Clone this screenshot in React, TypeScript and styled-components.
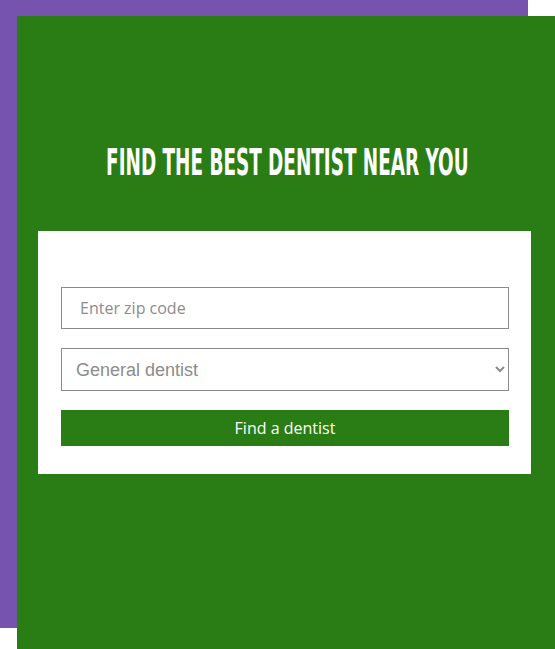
import React from "react";
import styled, { createGlobalStyle } from "styled-components";

const GlobalStyle = createGlobalStyle`
  html, body {
    margin: 0;
    padding: 0;
    background: #ffffff;
  }
`;

const App = () => {
  return (
    <>
      <GlobalStyle />
      <Frame>
        <Panel>
          <TitleRow>
            <Title>FIND THE BEST DENTIST NEAR YOU</Title>
          </TitleRow>
          <Card>
            <ZipInput placeholder="Enter zip code" />
            <TypeSelect defaultValue="general">
              <option value="general">General dentist</option>
              <option value="ortho">Orthodontist</option>
              <option value="pedo">Pediatric dentist</option>
            </TypeSelect>
            <FindButton>Find a dentist</FindButton>
          </Card>
        </Panel>
      </Frame>
    </>
  );
};

export default App;

const Frame = styled.div`
  position: relative;
  width: 555px;
  height: 649px;
  overflow: hidden;
  padding: 16px 0 0 17px;
  box-sizing: border-box;

  &::before {
    content: "";
    position: absolute;
    top: 0;
    left: 0;
    width: 528px;
    height: 628px;
    background: #7553ae;
  }
`;

const Panel = styled.div`
  position: relative;
  width: 538px;
  height: 633px;
  background: #2a7d14;
  display: flex;
  flex-direction: column;
  padding: 128px 24px 0 21px;
  box-sizing: border-box;
`;

const TitleRow = styled.div`
  display: flex;
  justify-content: center;
  height: 37px;
  margin: 0 0 50px 0;
  padding-left: 6px;
`;

const Title = styled.h1`
  margin: 0;
  font-family: "DejaVu Sans Condensed", "DejaVu Sans", sans-serif;
  font-weight: 700;
  font-size: 37px;
  line-height: 1;
  color: #ffffff;
  white-space: nowrap;
  transform: scaleX(0.552);
`;

const Card = styled.div`
  background: #ffffff;
  display: flex;
  flex-direction: column;
  gap: 19px;
  padding: 56px 22px 28px 23px;
`;

const ZipInput = styled.input`
  height: 42px;
  box-sizing: border-box;
  border: 1px solid #8a8a8a;
  background: #ffffff;
  padding: 0 18px;
  font-family: "Open Sans", sans-serif;
  font-size: 16px;
  color: #555;
  outline: none;

  &::placeholder {
    color: #8c8c8c;
  }
`;

const TypeSelect = styled.select`
  height: 43px;
  box-sizing: border-box;
  border: 1px solid #8a8a8a;
  border-radius: 0;
  background: #ffffff;
  padding: 0 10px;
  font-family: "Liberation Sans", Arial, sans-serif;
  font-size: 18px;
  color: #8c8c8c;
  outline: none;
`;

const FindButton = styled.button`
  height: 36px;
  border: none;
  background: #2a7d14;
  color: #ffffff;
  font-family: "Open Sans", sans-serif;
  font-size: 16px;
  cursor: pointer;
`;
